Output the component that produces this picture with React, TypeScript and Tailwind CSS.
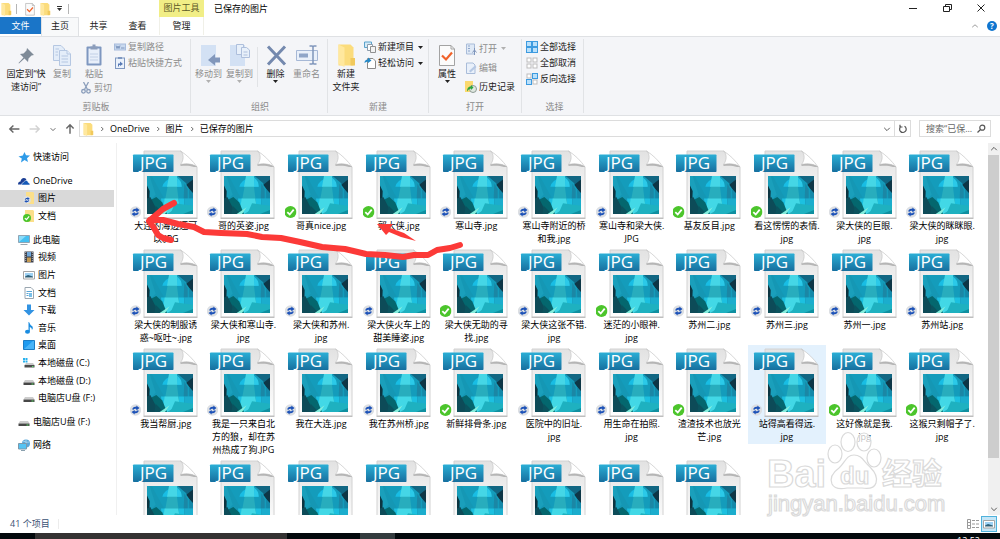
import React, { useState } from "react";

type Estado = "sync" | "ok";

interface Arquivo {
  nome: string;
  estado: Estado;
}

const arquivos: Arquivo[] = [
  { nome: "大连的海边还可\n以.JPG", estado: "sync" },
  { nome: "哥的英姿.jpg", estado: "sync" },
  { nome: "哥真nice.jpg", estado: "ok" },
  { nome: "郭大侠.jpg", estado: "ok" },
  { nome: "寒山寺.jpg", estado: "sync" },
  { nome: "寒山寺附近的桥\n和我.jpg", estado: "sync" },
  { nome: "寒山寺和梁大侠.\nJPG", estado: "sync" },
  { nome: "基友反目.jpg", estado: "ok" },
  { nome: "看这愣愣的表情.\njpg", estado: "ok" },
  { nome: "梁大侠的巨眼.\njpg", estado: "sync" },
  { nome: "梁大侠的眯眯眼.\njpg", estado: "sync" },
  { nome: "梁大侠的制服诱\n惑~呕吐~.jpg", estado: "sync" },
  { nome: "梁大侠和寒山寺.\njpg", estado: "sync" },
  { nome: "梁大侠和苏州.\njpg", estado: "sync" },
  { nome: "梁大侠火车上的\n甜美睡姿.jpg", estado: "sync" },
  { nome: "梁大侠无助的寻\n找.jpg", estado: "ok" },
  { nome: "梁大侠这张不错.\njpg", estado: "sync" },
  { nome: "迷茫的小眼神.\njpg", estado: "ok" },
  { nome: "苏州二.jpg", estado: "sync" },
  { nome: "苏州三.jpg", estado: "sync" },
  { nome: "苏州一.jpg", estado: "sync" },
  { nome: "苏州站.jpg", estado: "sync" },
  { nome: "我当帮厨.jpg", estado: "sync" },
  { nome: "我是一只来自北\n方的狼，却在苏\n州热成了狗.JPG", estado: "sync" },
  { nome: "我在大连.jpg", estado: "sync" },
  { nome: "我在苏州桥.jpg", estado: "sync" },
  { nome: "新鲜排骨条.jpg", estado: "ok" },
  { nome: "医院中的旧址.\njpg", estado: "sync" },
  { nome: "用生命在拍照.\njpg", estado: "sync" },
  { nome: "渣渣技术也放光\n芒.jpg", estado: "ok" },
  { nome: "站得高看得远.\njpg", estado: "sync" },
  { nome: "这好像就是我.\njpg", estado: "ok" },
  { nome: "这猴只剩帽子了.\njpg", estado: "ok" },
  ...Array.from({ length: 8 }, () => ({ nome: "", estado: "sync" as Estado })),
];

// ---------- icons ----------

function SyncMark() {
  return (
    <>
      <circle cx="6" cy="6" r="5.7" fill="#dcdfe3" />
      <path d="M2.8 5.6C3 3.4 5 2.4 6.8 3V1.4L10 4 6.8 6.4V4.9C5.4 4.4 4.4 4.8 4 5.8Z" fill="#1d52b8" />
      <path d="M9.2 6.4C9 8.600 7 9.600 5.2 9V10.6L2 8 5.2 5.9V7.2C6.6 7.6 7.6 7.2 8 6.2Z" fill="#1d52b8" />
    </>
  );
}

function OkMark() {
  return (
    <>
      <circle cx="6" cy="6" r="6" fill="#4cc52c" />
      <path d="M2.8 6.2 5.2 8.5 9.2 3.6" fill="none" stroke="#fff" strokeWidth="1.8" />
    </>
  );
}

function JpgIcon({ estado }: { estado: Estado }) {
  return (
    <svg viewBox="0 0 72 69" className="h-[69px] w-[72px] shrink-0" aria-hidden="true">
      <path d="M14 1H50.5L67 17V68H14Z" fill="url(#papel)" stroke="#d2d2d2" />
      <path d="M13.5 68.3H67.5" stroke="#b3b3b3" />
      <path d="M50.5 1C54 4 54 10 50.5 14.5 57 13 63 14 67 17 63 11 57 5 50.5 1Z" fill="#fff" stroke="#c4c4c4" strokeWidth=".7" />
      <path d="M50.5 14.5C57 13 63 14 67 17L64 17C60 15.5 55 15.5 50.5 16Z" fill="#b5b5b5" />
      <rect x="3" y="4.5" width="40.5" height="17.5" rx=".8" fill="url(#etiqueta)" />
      <text x="10" y="19" fontSize="17" fill="#fff" className="font-['Open_Sans',sans-serif]">
        JPG
      </text>
      <svg x="17" y="26" width="46" height="38" viewBox="0 0 138 112" preserveAspectRatio="none">
        <rect width="138" height="112" fill="#149cbb" />
        <path d="M0 0H14L52 68 48 112H0Z" fill="#1597b4" />
        <path d="M8 0 26 55 10 72 0 30V0Z" fill="#1a9fbb" />
        <path d="M92 0H138V48L116 20Z" fill="#126783" />
        <path d="M138 10V54L118 26Z" fill="#0e3646" />
        <path d="M112 22 122 40V112H108Z" fill="#1b87a5" />
        <path d="M126 38 138 50V112H128Z" fill="#1588a8" />
        <path d="M46 32A30 32 0 0 1 104 32Z" fill="#18bde4" />
        <path d="M42 66H112V112H48Z" fill="#1cc0e0" />
        <path d="M112 66H138V112H112Z" fill="#1badcd" />
        <path d="M68 0H86L100 112H46Z" fill="#28adbd" />
        <path d="M66 0H90L92 32H60Z" fill="#45d6e6" />
        <path d="M90 5A30 30 0 0 1 104 32H92Z" fill="#2bc9e8" />
        <path d="M53 66H93L98 90 60 112H46Z" fill="#42d8e6" />
        <path d="M0 28 8 44 7 74 0 88Z" fill="#0c3440" />
        <path d="M8 72 28 62 46 78 60 112H0V90Z" fill="#04676e" />
        <path d="M0 66 10 62 36 112H0Z" fill="#0d4b58" />
        <path d="M26 88 50 112H22Z" fill="#0b535e" />
        <path d="M70 112 84 80 138 88V112Z" fill="#1eb1c0" />
        <path d="M38 112 68 92 54 112Z" fill="#84eedd" />
        <path d="M108 112 138 100V112Z" fill="#0f8fa0" />
      </svg>
      <svg x="-.5" y="56" width="12" height="12" viewBox="0 0 12 12">
        {estado === "ok" ? <OkMark /> : <SyncMark />}
      </svg>
    </svg>
  );
}

function Pasta({ className }: { className: string }) {
  return (
    <svg viewBox="0 0 12 16" className={className} aria-hidden="true">
      <path d="M1 1H9L11 3V15H1Z" fill="#fbdc7c" />
      <path d="M1 1 5 3V16L1 14Z" fill="#ffe89e" />
      <path d="M9 10H12V15H9Z" fill="#f1c95c" />
    </svg>
  );
}

function Seta({ tom = "#333" }: { tom?: string }) {
  return (
    <svg viewBox="0 0 5 3" className="h-[3px] w-[5px] shrink-0" aria-hidden="true">
      <path d="M0 0H5L2.5 3Z" fill={tom} />
    </svg>
  );
}

function Chevron({ d, className }: { d: string; className: string }) {
  return (
    <svg viewBox="0 0 10 10" className={className} fill="none" stroke="currentColor" strokeWidth="1.2" aria-hidden="true">
      <path d={d} />
    </svg>
  );
}

const grande = "h-6 w-6";
const pequeno = "h-3 w-3 shrink-0";

function IconePin() {
  return (
    <svg viewBox="0 0 24 24" className={grande} aria-hidden="true">
      <path d="M13 5 20 12 17.5 12.5 14.5 15.5 14 19 10.5 15.5 5 20.5 4.5 20 9.5 14.5 6 11 9.5 10.5 12.5 7.5Z" fill="#7f8b98" />
    </svg>
  );
}

function IconeCopiar() {
  return (
    <svg viewBox="0 0 24 24" className={grande} fill="#e4edf9" stroke="#b5c7e2" aria-hidden="true">
      <path d="M3.5 2.5H11L14.5 6V17.5H3.5Z" />
      <path d="M5.5 6H9M5.5 9H8M5.5 12H8" />
      <path d="M9.5 7.5H17L20.5 11V22.5H9.5Z" />
      <path d="M11.5 13H18M11.5 16H18M11.5 19H18M17 7.5V11H20.5" />
    </svg>
  );
}

function IconeColar() {
  return (
    <svg viewBox="0 0 24 24" className={grande} aria-hidden="true">
      <rect x="4.5" y="3.5" width="15" height="19" rx="1" fill="#7e97c0" />
      <rect x="6.5" y="5.5" width="11" height="15" fill="#e8effa" />
      <path d="M8 11H16M8 14H16M8 17H16" stroke="#c2d0e6" />
      <path d="M8.5 3.5H10.5V1.5H13.5V3.5H15.5V6.5H8.5Z" fill="#8c9dbb" />
    </svg>
  );
}

function IconeTesoura() {
  return (
    <svg viewBox="0 0 12 12" className={pequeno} fill="none" stroke="#8b9ebc" strokeWidth="1.3" aria-hidden="true">
      <path d="M3.5 0 7.5 7.5M8.5 0 4.5 7.5" />
      <circle cx="3.5" cy="9.3" r="1.8" />
      <circle cx="8.5" cy="9.3" r="1.8" />
    </svg>
  );
}

function IconeCaminho() {
  return (
    <svg viewBox="0 0 12 12" className={pequeno} aria-hidden="true">
      <rect x=".5" y="3" width="11" height="6" fill="#c9d9ef" stroke="#a7bcdc" />
      <path d="M2 4.5 3 7.5 4 5 5 7.5 6 4.5M7 7H10.5" fill="none" stroke="#6c86b2" strokeWidth=".8" />
    </svg>
  );
}

function IconeAtalho() {
  return (
    <svg viewBox="0 0 12 12" className={pequeno} aria-hidden="true">
      <rect x="1.5" y="1" width="9" height="10.5" fill="#eaf1fb" stroke="#7e97c0" />
      <path d="M4 0H8V2H4Z" fill="#7e97c0" />
      <path d="M4 9.5V6.5H6V4.5L9 7 6 9V8H5V9.5Z" fill="#5779b5" />
    </svg>
  );
}

function IconeMover() {
  return (
    <svg viewBox="0 0 24 24" className={grande} aria-hidden="true">
      <rect x="4" y="2" width="15" height="21" fill="#d3e1f4" />
      <path d="M23 14.5H18V11L11 17 18 22.5V19.5H23Z" fill="#8297bb" />
    </svg>
  );
}

function IconeCopiarPara() {
  return (
    <svg viewBox="0 0 24 24" className={grande} aria-hidden="true">
      <rect x="2" y="2" width="15" height="21" fill="#d3e1f4" />
      <g fill="#e8f0fa" stroke="#aebfdc">
        <path d="M8.5 1.5H15.5V11.5H8.5Z" />
        <path d="M13.5 4.5H18.5L21.5 7V14.5H13.5Z" />
        <path d="M15.5 9H19.5M15.5 12H19.5" />
      </g>
    </svg>
  );
}

function IconeExcluir() {
  return (
    <svg viewBox="0 0 24 24" className={grande} fill="none" stroke="#7489ae" strokeWidth="3" aria-hidden="true">
      <path d="M4 3.5 21 21.5M21 3.5 4 21.5" />
    </svg>
  );
}

function IconeRenomear() {
  return (
    <svg viewBox="0 0 24 24" className={grande} fill="none" stroke="#a6b8d6" aria-hidden="true">
      <path d="M1.5 7.5H22.5V17.5H1.5Z" fill="#e9f0fa" />
      <path d="M4 10.5H13V14.5H4Z" fill="#8fa5c8" stroke="none" />
      <path d="M14.5 3H17Q18 3 18 4.5V19.5Q18 21 17 21H14.5M21.5 3H19Q18 3 18 4.5M21.5 21H19Q18 21 18 19.5" stroke="#7f95bb" strokeWidth="1.5" />
    </svg>
  );
}

function IconeNovoItem() {
  return (
    <svg viewBox="0 0 12 12" className={pequeno} aria-hidden="true">
      <path d="M.5 1H7.5V6.5H.5Z" fill="#d5eaf7" stroke="#5aa2cc" />
      <path d="M3.5 3.5H8.5V9.5H3.5Z" fill="#fff" stroke="#8b9bab" />
      <path d="M6.5 5.5H11.5V11.5H6.5Z" fill="#f2f2f2" stroke="#909090" />
    </svg>
  );
}

function IconeAcesso() {
  return (
    <svg viewBox="0 0 12 12" className={pequeno} aria-hidden="true">
      <path d="M3.5 1.5H9L11.5 4V11.5H3.5Z" fill="#fff" stroke="#8a8a8a" />
      <path d="M.5 6Q.5 2.5 4 2.5V.5L7.5 3.5 4 6V4.5Q2 4.5 .5 6Z" fill="#2389c9" />
    </svg>
  );
}

function IconePropriedades({ className }: { className: string }) {
  return (
    <svg viewBox="0 0 24 24" className={className} aria-hidden="true">
      <path d="M4.5 2.5H16L19.5 6V22.5H4.5Z" fill="#fbfbfb" stroke="#a3a3a3" />
      <path d="M16 2.5V6H19.5" fill="none" stroke="#a3a3a3" />
      <path d="M7 12.5 11 16.5 17 9.5" fill="none" stroke="#f0622a" strokeWidth="2.2" />
    </svg>
  );
}

function IconeAbrir() {
  return (
    <svg viewBox="0 0 12 12" className={pequeno} aria-hidden="true">
      <path d="M1.5 1H9.5V11H1.5Z" fill="#dfe9f6" stroke="#a9bcd9" />
      <path d="M3 3H5M3 5.5H5M3 8H5" stroke="#8ea5ca" />
      <path d="M9.5 5V12M7.5 9.5 9.5 7 11.5 9.5" fill="none" stroke="#7f95bb" />
    </svg>
  );
}

function IconeEditar() {
  return (
    <svg viewBox="0 0 12 12" className={pequeno} aria-hidden="true">
      <path d="M1.5 1H8L10 3V11.5H1.5Z" fill="#e9f0fa" stroke="#a9bcd9" />
      <path d="M4 9 10 3.5 11.5 5 5.5 10.5Z" fill="#b5c8e4" />
    </svg>
  );
}

function IconeHistorico() {
  return (
    <svg viewBox="0 0 12 12" className={pequeno} aria-hidden="true">
      <path d="M0 0H8V11H0Z" fill="#fbd96e" />
      <circle cx="8" cy="8" r="3.5" fill="#dfe7e0" stroke="#8d9a94" />
      <path d="M2 10.5Q2 5.5 6 5.5V4L8.5 6.5 6 9V7.5Q4 7.5 2 10.5Z" fill="#2da53c" />
    </svg>
  );
}

function IconeSelecao({ cores }: { cores: [boolean, boolean, boolean, boolean] }) {
  const pos = [
    [0.5, 0.5],
    [6.5, 0.5],
    [0.5, 6.5],
    [6.5, 6.5],
  ];
  return (
    <svg viewBox="0 0 12 12" className={pequeno} aria-hidden="true">
      {pos.map(([x, y], i) =>
        cores[i] ? (
          <rect key={i} x={x} y={y} width="5" height="5" fill="#b9e0fb" stroke="#3d9be0" />
        ) : (
          <rect key={i} x={x + 0.5} y={y + 0.5} width="4" height="4" fill="#fff" stroke="#bdbdbd" />
        )
      )}
    </svg>
  );
}

// ---------- ribbon ----------

interface BotaoGrandeProps {
  icone: React.ReactNode;
  texto: string;
  largura: string;
  inativo?: boolean;
  menu?: boolean;
}

function BotaoGrande({ icone, texto, largura, inativo, menu }: BotaoGrandeProps) {
  return (
    <button
      type="button"
      className={`flex flex-col items-center whitespace-pre pt-1 text-center ${largura} ${
        inativo ? "text-[#8d8d8d]" : "text-[#1a1a1a]"
      }`}
    >
      {icone}
      <span className="leading-[13px]">{texto}</span>
      {menu && <Seta tom={inativo ? "#b0b0b0" : "#222"} />}
    </button>
  );
}

interface BotaoLinhaProps {
  icone: React.ReactNode;
  texto: string;
  altura?: string;
  inativo?: boolean;
  menu?: boolean;
}

function BotaoLinha({ icone, texto, altura = "h-4", inativo, menu }: BotaoLinhaProps) {
  return (
    <button
      type="button"
      className={`flex items-center gap-0.5 whitespace-nowrap ${altura} ${
        inativo ? "text-[#8d8d8d]" : "text-[#1a1a1a]"
      }`}
    >
      {icone}
      <span>{texto}</span>
      {menu && (
        <span className="pl-0.5">
          <Seta tom={inativo ? "#b0b0b0" : "#222"} />
        </span>
      )}
    </button>
  );
}

interface GrupoProps {
  nome: string;
  largura: string;
  children: React.ReactNode;
}

function Grupo({ nome, largura, children }: GrupoProps) {
  return (
    <section aria-label={nome} className={`my-0.5 flex flex-col border-r border-[#e1e3e6] ${largura}`}>
      <div className="flex flex-1 items-start">{children}</div>
      <div className="h-[13px] text-center leading-[13px] text-[#8a8a8a]">{nome}</div>
    </section>
  );
}

function Ribbon() {
  return (
    <div className="flex h-20 shrink-0 border-y border-[#dfe1e4] bg-[#f4f5f8]">
      <Grupo nome="剪贴板" largura="w-[191px] pl-0.5">
        <BotaoGrande icone={<IconePin />} texto={"固定到“快\n速访问”"} largura="w-12" />
        <BotaoGrande icone={<IconeCopiar />} texto="复制" largura="w-6" inativo />
        <div className="flex w-10 flex-col items-center">
          <BotaoGrande icone={<IconeColar />} texto="粘贴" largura="w-9" inativo />
          <div className="pl-1">
            <BotaoLinha icone={<IconeTesoura />} texto="剪切" inativo />
          </div>
        </div>
        <div className="flex flex-col">
          <BotaoLinha icone={<IconeCaminho />} texto="复制路径" inativo />
          <BotaoLinha icone={<IconeAtalho />} texto="粘贴快捷方式" inativo />
        </div>
      </Grupo>
      <Grupo nome="组织" largura="w-[137px] pl-0.5">
        <BotaoGrande icone={<IconeMover />} texto="移动到" largura="w-[31px]" inativo menu />
        <BotaoGrande icone={<IconeCopiarPara />} texto="复制到" largura="w-[31px]" inativo menu />
        <div className="mx-0.5 mt-2 h-10 w-px bg-[#e1e3e6]" />
        <BotaoGrande icone={<IconeExcluir />} texto="删除" largura="w-[31px]" menu />
        <BotaoGrande icone={<IconeRenomear />} texto="重命名" largura="w-[31px]" inativo />
      </Grupo>
      <Grupo nome="新建" largura="w-[101px]">
        <BotaoGrande icone={<Pasta className={grande} />} texto={"新建\n文件夹"} largura="w-9" />
        <div className="flex flex-col">
          <BotaoLinha icone={<IconeNovoItem />} texto="新建项目" menu />
          <BotaoLinha icone={<IconeAcesso />} texto="轻松访问" menu />
        </div>
      </Grupo>
      <Grupo nome="打开" largura="w-[93px]">
        <BotaoGrande icone={<IconePropriedades className={grande} />} texto="属性" largura="w-9" menu />
        <div className="flex flex-col">
          <BotaoLinha icone={<IconeAbrir />} texto="打开" altura="h-[19px]" inativo menu />
          <BotaoLinha icone={<IconeEditar />} texto="编辑" altura="h-[19px]" inativo />
          <BotaoLinha icone={<IconeHistorico />} texto="历史记录" altura="h-[19px]" />
        </div>
      </Grupo>
      <Grupo nome="选择" largura="w-[62px] pl-1">
        <div className="flex flex-col">
          <BotaoLinha icone={<IconeSelecao cores={[true, true, true, true]} />} texto="全部选择" />
          <BotaoLinha icone={<IconeSelecao cores={[false, false, false, false]} />} texto="全部取消" />
          <BotaoLinha icone={<IconeSelecao cores={[false, true, true, false]} />} texto="反向选择" />
        </div>
      </Grupo>
    </div>
  );
}

// ---------- title, tabs ----------

function Cabecalho() {
  return (
    <header className="flex h-9 shrink-0">
      <div className="flex w-[159px] flex-col">
        <div className="flex h-[17px] items-center">
          <Pasta className="h-3.5 w-3" />
          <span className="ml-1 mr-1.5 h-2.5 w-px bg-[#b5b5b5]" />
          <button type="button" aria-label="属性">
            <IconePropriedades className="h-3.5 w-3.5" />
          </button>
          <button type="button" aria-label="新建文件夹" className="ml-0.5">
            <Pasta className="h-3.5 w-3" />
          </button>
          <button type="button" aria-label="自定义快速访问工具栏" className="ml-1.5 flex flex-col gap-px">
            <span className="h-px w-[5px] bg-[#333]" />
            <Seta />
          </button>
          <span className="ml-1.5 h-2.5 w-px bg-[#b5b5b5]" />
        </div>
        <div className="flex flex-1 items-start">
          <button type="button" className="h-[17px] w-[41px] bg-[#1a75c8] text-white">
            文件
          </button>
          <button type="button" className="-mb-px h-5 w-[38px] border-x border-t border-[#dfe1e4] bg-[#f8f9fa] pb-1 text-[#222]">
            主页
          </button>
          <button type="button" className="h-[18px] w-[39px] text-[#222]">
            共享
          </button>
          <button type="button" className="h-[18px] w-[39px] text-[#222]">
            查看
          </button>
        </div>
      </div>
      <div className="flex w-[45px] flex-col text-center">
        <div className="h-[17px] bg-[#f1ee86] leading-[15px] text-[#5d5a28]">图片工具</div>
        <button type="button" className="h-[18px] border-x border-[#f0f0e8] text-[#222]">
          管理
        </button>
      </div>
      <h1 className="pl-2.5 leading-[17px]">已保存的图片</h1>
      <div className="ml-auto flex flex-col items-end">
        <div className="flex h-4 items-center gap-6 pr-3.5">
          <button type="button" aria-label="最小化">
            <svg viewBox="0 0 10 10" className="h-2.5 w-2.5" fill="none" stroke="#222">
              <path d="M1 5.5H9" />
            </svg>
          </button>
          <button type="button" aria-label="向下还原">
            <svg viewBox="0 0 10 10" className="h-2.5 w-2.5" fill="none" stroke="#222">
              <path d="M1.5 3.5H7.5V8.5H1.5ZM3.5 3.5V1.5H9.5V6.5H7.5" />
            </svg>
          </button>
          <button type="button" aria-label="关闭">
            <svg viewBox="0 0 10 10" className="h-2.5 w-2.5" fill="none" stroke="#222">
              <path d="M1.5 1.5 8.5 8.5M8.5 1.5 1.5 8.5" />
            </svg>
          </button>
        </div>
        <div className="flex h-5 items-center gap-2 pr-[3px]">
          <button type="button" aria-label="最小化功能区" className="text-[#999]">
            <Chevron d="M1.5 6.5 5 3.5 8.5 6.5" className="h-2 w-2" />
          </button>
          <button type="button" aria-label="帮助" className="h-2.5 w-2.5 rounded-full bg-[#0f75cf] text-center text-[8px] font-bold leading-[10px] text-white">
            ?
          </button>
        </div>
      </div>
    </header>
  );
}

function BarraEndereco() {
  const [busca, setBusca] = useState<string>("");

  return (
    <div className="mb-0.5 flex h-[25px] shrink-0 items-center pr-[9px]">
      <div className="flex w-[79px] items-center pl-2 text-[#666]">
        <button type="button" aria-label="后退">
          <Chevron d="M9.5 5H1.5M4.5 2 1.5 5 4.5 8" className="h-3 w-3" />
        </button>
        <button type="button" aria-label="前进" className="ml-[9px] text-[#d2d2d2]">
          <Chevron d="M.5 5H8.5M5.5 2 8.5 5 5.5 8" className="h-3 w-3" />
        </button>
        <button type="button" aria-label="最近浏览的位置" className="ml-2">
          <Chevron d="M2 4 5 7 8 4" className="h-2 w-2" />
        </button>
        <button type="button" aria-label="上移" className="ml-[7px]">
          <Chevron d="M5 9V1.5M2 4.5 5 1.5 8 4.5" className="h-3 w-3" />
        </button>
      </div>
      <div className="flex h-[17px] min-w-0 flex-1 items-center border border-[#dcdcdc]">
        <Pasta className="ml-0.5 h-3.5 w-3" />
        {["OneDrive", "图片", "已保存的图片"].map((parte) => (
          <React.Fragment key={parte}>
            <Chevron d="M4 2.5 6.5 5 4 7.5" className="mx-1 h-2 w-2 text-[#666]" />
            <button type="button">{parte}</button>
          </React.Fragment>
        ))}
        <button type="button" aria-label="以前的位置" className="ml-auto mr-0.5 text-[#555]">
          <Chevron d="M1.5 3.5 5 7 8.5 3.5" className="h-2 w-2.5" />
        </button>
        <button type="button" aria-label="刷新" className="flex h-full w-4 items-center justify-center border-l border-[#dcdcdc] text-[#555]">
          <svg viewBox="0 0 10 10" className="h-2.5 w-2.5" fill="none" stroke="currentColor" strokeWidth="1.2">
            <path d="M6.5 2.3A3.3 3.3 0 1 1 3 2.5M2 .8V3H4.5" />
          </svg>
        </button>
      </div>
      <div className="ml-2 flex h-[17px] w-[72px] items-center border border-[#dcdcdc] pl-1.5 pr-1">
        <input
          type="text"
          aria-label="搜索"
          value={busca}
          placeholder="搜索“已保..."
          onChange={(e) => setBusca(e.target.value)}
          className="min-w-0 flex-1 text-[9px] outline-none placeholder:text-[#666]"
        />
        <svg viewBox="0 0 10 10" className="h-2.5 w-2.5 shrink-0" fill="none" stroke="#555" strokeWidth="1.2" aria-hidden="true">
          <circle cx="6.3" cy="3.7" r="2.5" />
          <path d="M4.5 5.5 1.5 8.5" />
        </svg>
      </div>
    </div>
  );
}

// ---------- sidebar ----------

const desenhos: Record<string, React.ReactNode> = {
  estrela: <path d="M6.5 1 8 4.2 12 4.5 9 7.2 10 11 6.5 9 3 11.5 3.8 7.5 .5 5.5 4.8 4.5Z" fill="#2f9be8" />,
  nuvem: (
    <>
      <path d="M0 9.5Q0 6.500 2.5 6.500 3 3 6 3 8 3 8.500 5L5 9.5Z" fill="#1b3f95" />
      <path d="M3.500 10Q3.500 7.500 5.500 7.500 6.500 5 8.500 5.500 10.200 6 10.200 7.500 12 7.700 12 10Z" fill="#1459b8" stroke="#fff" strokeWidth=".5" />
    </>
  ),
  pastaSync: (
    <>
      <path d="M3 0H10L11 1V12H3Z" fill="#fbdf8a" />
      <svg x="0" y="4" width="8" height="8" viewBox="0 0 12 12">
        <SyncMark />
      </svg>
    </>
  ),
  pastaOk: (
    <>
      <path d="M2 0H10L11 1V12H2Z" fill="#fbdf8a" />
      <svg x="0" y="4" width="8" height="8" viewBox="0 0 12 12">
        <OkMark />
      </svg>
    </>
  ),
  pc: (
    <>
      <path d="M.5 1.5H11.5V8.5H.5Z" fill="#45c0f2" stroke="#8fa5b5" />
      <path d="M1 8 8 2H1Z" fill="#8bdcfa" />
      <path d="M2.5 10.5H9.5" stroke="#9aa8b2" />
    </>
  ),
  video: (
    <>
      <path d="M1.5 .5H10.5V11.5H1.5Z" fill="#3b3f4a" />
      <path d="M4 1H8V5.5H4Z" fill="#6fa7da" />
      <path d="M4 6.5H8V11H4Z" fill="#c49a52" />
      <path d="M2.7 1V11M9.3 1V11" stroke="#d6d6d6" strokeDasharray="1 1" strokeWidth=".8" />
    </>
  ),
  foto: (
    <>
      <path d="M.5 2.5H11.5V10H.5Z" fill="#fff" stroke="#a4a4a4" />
      <path d="M2 4H10V7H2Z" fill="#9fd2f4" />
      <path d="M2 7.5 5 6 10 7.5V8.5H2Z" fill="#2d5f77" />
    </>
  ),
  documento: (
    <>
      <path d="M2 .5H8L10.5 3V11.5H2Z" fill="#fff" stroke="#9aa6b0" />
      <path d="M3.5 4.5H9M3.5 6.5H5.5M3.5 8.5H5.5" stroke="#58a5d6" />
      <path d="M6 6H9V10H6Z" fill="#79bfe8" />
    </>
  ),
  baixar: <path d="M4 .5H8V6H11.5L6 11.5 .5 6H4Z" fill="#3293e2" />,
  musica: (
    <>
      <path d="M6 0Q7 3 9.5 4.5 10.5 6 9 8 9 5.5 6.8 5V9.5H5.5V0Z" fill="#1a8ce0" />
      <ellipse cx="4.5" cy="9.7" rx="2.5" ry="2" fill="#1a8ce0" />
    </>
  ),
  mesa: (
    <>
      <path d="M.5 1.5H11.5V10.5H.5Z" fill="#1f9bf0" stroke="#1c7cc4" />
      <path d="M1 10 10 2H11V10Z" fill="#49b4f8" />
    </>
  ),
  discoC: (
    <>
      <path d="M0 1H2V3H0ZM2.5 1H4.5V3H2.5ZM0 3.5H2V5.5H0ZM2.5 3.5H4.5V5.5H2.5Z" fill="#29b2ee" />
      <path d="M3 6H10L11.5 8H1.5Z" fill="#c9c9c9" />
      <path d="M1.5 8H11.5V10.5H1.5Z" fill="#4d4d4d" />
      <path d="M9 9.5H10.5" stroke="#5fdc6a" />
    </>
  ),
  disco: (
    <>
      <path d="M2 5H10L11.5 7.5H.5Z" fill="#cdcdcd" />
      <path d="M.5 7.5H11.5V10H.5Z" fill="#474747" />
      <path d="M8.5 9H10.5" stroke="#5fdc6a" />
    </>
  ),
  rede: (
    <>
      <circle cx="8" cy="4.5" r="4" fill="#5aa6d8" />
      <path d="M5 2Q9 4 11.5 3M8 .5V8" stroke="#bfe2f5" fill="none" strokeWidth=".7" />
      <path d="M.5 4.5H8.5V10H.5Z" fill="#55c3f3" stroke="#7d99ab" />
      <path d="M3 11.5H7" stroke="#8aa0ae" />
    </>
  ),
};

interface ItemMenu {
  texto: string;
  icone: string;
  filho?: boolean;
  ativo?: boolean;
}

const menu: { altura: string; itens: ItemMenu[] }[] = [
  { altura: "h-[18px]", itens: [{ texto: "快速访问", icone: "estrela" }] },
  {
    altura: "h-[53px]",
    itens: [
      { texto: "OneDrive", icone: "nuvem" },
      { texto: "图片", icone: "pastaSync", filho: true, ativo: true },
      { texto: "文档", icone: "pastaOk", filho: true },
    ],
  },
  {
    altura: "h-[176px]",
    itens: [
      { texto: "此电脑", icone: "pc" },
      { texto: "视频", icone: "video", filho: true },
      { texto: "图片", icone: "foto", filho: true },
      { texto: "文档", icone: "documento", filho: true },
      { texto: "下载", icone: "baixar", filho: true },
      { texto: "音乐", icone: "musica", filho: true },
      { texto: "桌面", icone: "mesa", filho: true },
      { texto: "本地磁盘 (C:)", icone: "discoC", filho: true },
      { texto: "本地磁盘 (D:)", icone: "disco", filho: true },
      { texto: "电脑店U盘 (F:)", icone: "disco", filho: true },
    ],
  },
  { altura: "h-[17px]", itens: [{ texto: "电脑店U盘 (F:)", icone: "disco" }] },
  { altura: "h-[17px]", itens: [{ texto: "网络", icone: "rede" }] },
];

function Lateral() {
  return (
    <nav aria-label="导航窗格" className="flex w-[117px] shrink-0 flex-col gap-1.5 border-r border-[#f0f0f0] pr-0.5 pt-[5px]">
      {menu.map((grupo, i) => (
        <div key={i} className={`grid shrink-0 auto-rows-fr ${grupo.altura}`}>
          {grupo.itens.map((item) => (
            <a
              key={item.texto}
              href="#"
              className={`flex items-center gap-[3px] whitespace-nowrap ${item.filho ? "pl-[23px]" : "pl-[18px]"} ${
                item.ativo ? "bg-[#d9d9d9]" : ""
              }`}
            >
              <svg viewBox="0 0 12 12" className={pequeno} aria-hidden="true">
                {desenhos[item.icone]}
              </svg>
              {item.texto}
            </a>
          ))}
        </div>
      ))}
    </nav>
  );
}

// ---------- files ----------

function ListaArquivos() {
  return (
    <main className="min-w-0 flex-1 overflow-hidden pl-[10px] pr-[7px] pt-1">
      <ul className="grid grid-cols-11 items-start">
        {arquivos.map((arquivo, i) => (
          <li key={i} className={i === 30 ? "bg-[#e3f1fd]" : ""}>
            <button type="button" aria-label={arquivo.nome || "JPG"} className="flex w-full flex-col items-center pb-px pt-[3px]">
              <JpgIcon estado={arquivo.estado} />
              <span className="whitespace-pre text-center leading-[13px]">{arquivo.nome}</span>
            </button>
          </li>
        ))}
      </ul>
    </main>
  );
}

function Rolagem() {
  return (
    <div className="flex w-3 shrink-0 flex-col items-center bg-[#f0f0f0] text-[#555]">
      <button type="button" aria-label="向上滚动" className="flex h-3 items-center">
        <Chevron d="M1.5 6.5 5 3 8.5 6.5" className="h-2 w-2" />
      </button>
      <div className="flex w-full flex-1 flex-col">
        <div className="h-[87%] w-[11px] bg-[#cdcdcd]" />
      </div>
      <button type="button" aria-label="向下滚动" className="flex h-3 items-center">
        <Chevron d="M1.5 3.5 5 7 8.5 3.5" className="h-2 w-2" />
      </button>
    </div>
  );
}

function BarraStatus() {
  return (
    <footer className="flex h-[18px] shrink-0 items-center pl-2.5 pr-[3px] text-[#3a5173]">
      <span>41 个项目</span>
      <span className="ml-2 h-2.5 w-px bg-[#ececec]" />
      <button type="button" aria-label="详细信息" className="ml-auto mr-0.5">
        <svg viewBox="0 0 12 10" className="h-2.5 w-3" fill="none" stroke="#9a9a9a">
          <path d="M.5 .5H3.5V9.5H.5ZM.5 3.5H3.5M.5 6.5H3.5M5 1.5H8M9 1.5H12M5 5H8M9 5H12M5 8.5H8M9 8.5H12" />
        </svg>
      </button>
      <button type="button" aria-label="大图标" className="flex h-4 w-4 items-center justify-center border border-[#4fb2dc] bg-[#c5e6f7]">
        <svg viewBox="0 0 12 12" className="h-3 w-3">
          {desenhos.foto}
        </svg>
      </button>
    </footer>
  );
}

// freehand red marks drawn over the window
function Rabiscos() {
  return (
    <svg viewBox="130 190 340 75" className="pointer-events-none absolute left-[130px] top-[190px] h-[75px] w-[340px]" aria-hidden="true">
      <g fill="none" stroke="#fc3a38" strokeWidth="6" strokeLinecap="round" strokeLinejoin="round">
        <path d="M174 203 163 209 156 215 149 221 154 228 158 235 163 238 171 240" />
        <path d="M150 220 163 220 178 224 194 227 204 232 221 233 247 234 262 237 281 238 300 242 322 247 345 249 366 254 385 255 403 257 414 255 428 255 437 250 450 248 460 245" />
      </g>
      <path d="M377 224 393 224 390 228 404 233 416 241 401 237 389 232 386 235Z" fill="#fc3a38" />
    </svg>
  );
}

function MarcaDagua() {
  return (
    <svg
      viewBox="766 430 182 88"
      className="pointer-events-none absolute bottom-[21px] right-[52px] h-[88px] w-[182px] font-['Liberation_Sans','Noto_Sans_CJK_SC',sans-serif]"
      fill="#fff"
      fillOpacity=".75"
      stroke="#dadada"
      strokeWidth="1.2"
      aria-hidden="true"
    >
      <ellipse cx="835" cy="454" rx="7" ry="9" />
      <ellipse cx="848" cy="442" rx="7" ry="9.5" />
      <ellipse cx="864" cy="442" rx="7" ry="9" />
      <ellipse cx="874" cy="458" rx="7" ry="9" />
      <path d="M854 455C846 455 845 463 839 468 832 473 830 479 832 484 835 490 842 489 847 488H862C868 489 874 489 876 483 878 477 875 472 870 467 864 462 862 455 854 455Z" />
      <text x="767" y="487" fontSize="38" fontWeight="700">
        Bai
      </text>
      <text x="840" y="484" fontSize="24" fontWeight="700">
        du
      </text>
      <text x="882" y="484" fontSize="30" fontWeight="700">
        经验
      </text>
      <text x="768" y="511" fontSize="22">
        jingyan.baidu.com
      </text>
    </svg>
  );
}

function BarraTarefas() {
  return (
    <div className="flex h-1.5 shrink-0 overflow-hidden bg-[#03090c]">
      <div className="w-[35px]" />
      <div className="w-[252px] bg-[#343232]" />
      <div className="w-[73px]" />
      <div className="w-[35px] bg-[#333b3e]" />
      <time className="ml-auto pr-5 pt-0.5 leading-[11px] text-white">12:52</time>
    </div>
  );
}

export default function App() {
  return (
    <div className="relative flex h-screen flex-col overflow-hidden bg-white font-['Open_Sans','Noto_Sans_CJK_SC',sans-serif] text-[9px] leading-3 text-black">
      <svg className="h-0 w-0" aria-hidden="true">
        <defs>
          <linearGradient id="papel" x1="0" y1="0" x2="0" y2="1">
            <stop offset="0" stopColor="#e2e2e2" />
            <stop offset=".5" stopColor="#f1f1f1" />
            <stop offset="1" stopColor="#fff" />
          </linearGradient>
          <linearGradient id="etiqueta" x1="0" y1="0" x2="0" y2="1">
            <stop offset="0" stopColor="#2bafd6" />
            <stop offset="1" stopColor="#176f9e" />
          </linearGradient>
        </defs>
      </svg>
      <Cabecalho />
      <Ribbon />
      <BarraEndereco />
      <div className="flex min-h-0 flex-1">
        <Lateral />
        <ListaArquivos />
        <Rolagem />
      </div>
      <BarraStatus />
      <BarraTarefas />
      <Rabiscos />
      <MarcaDagua />
    </div>
  );
}
